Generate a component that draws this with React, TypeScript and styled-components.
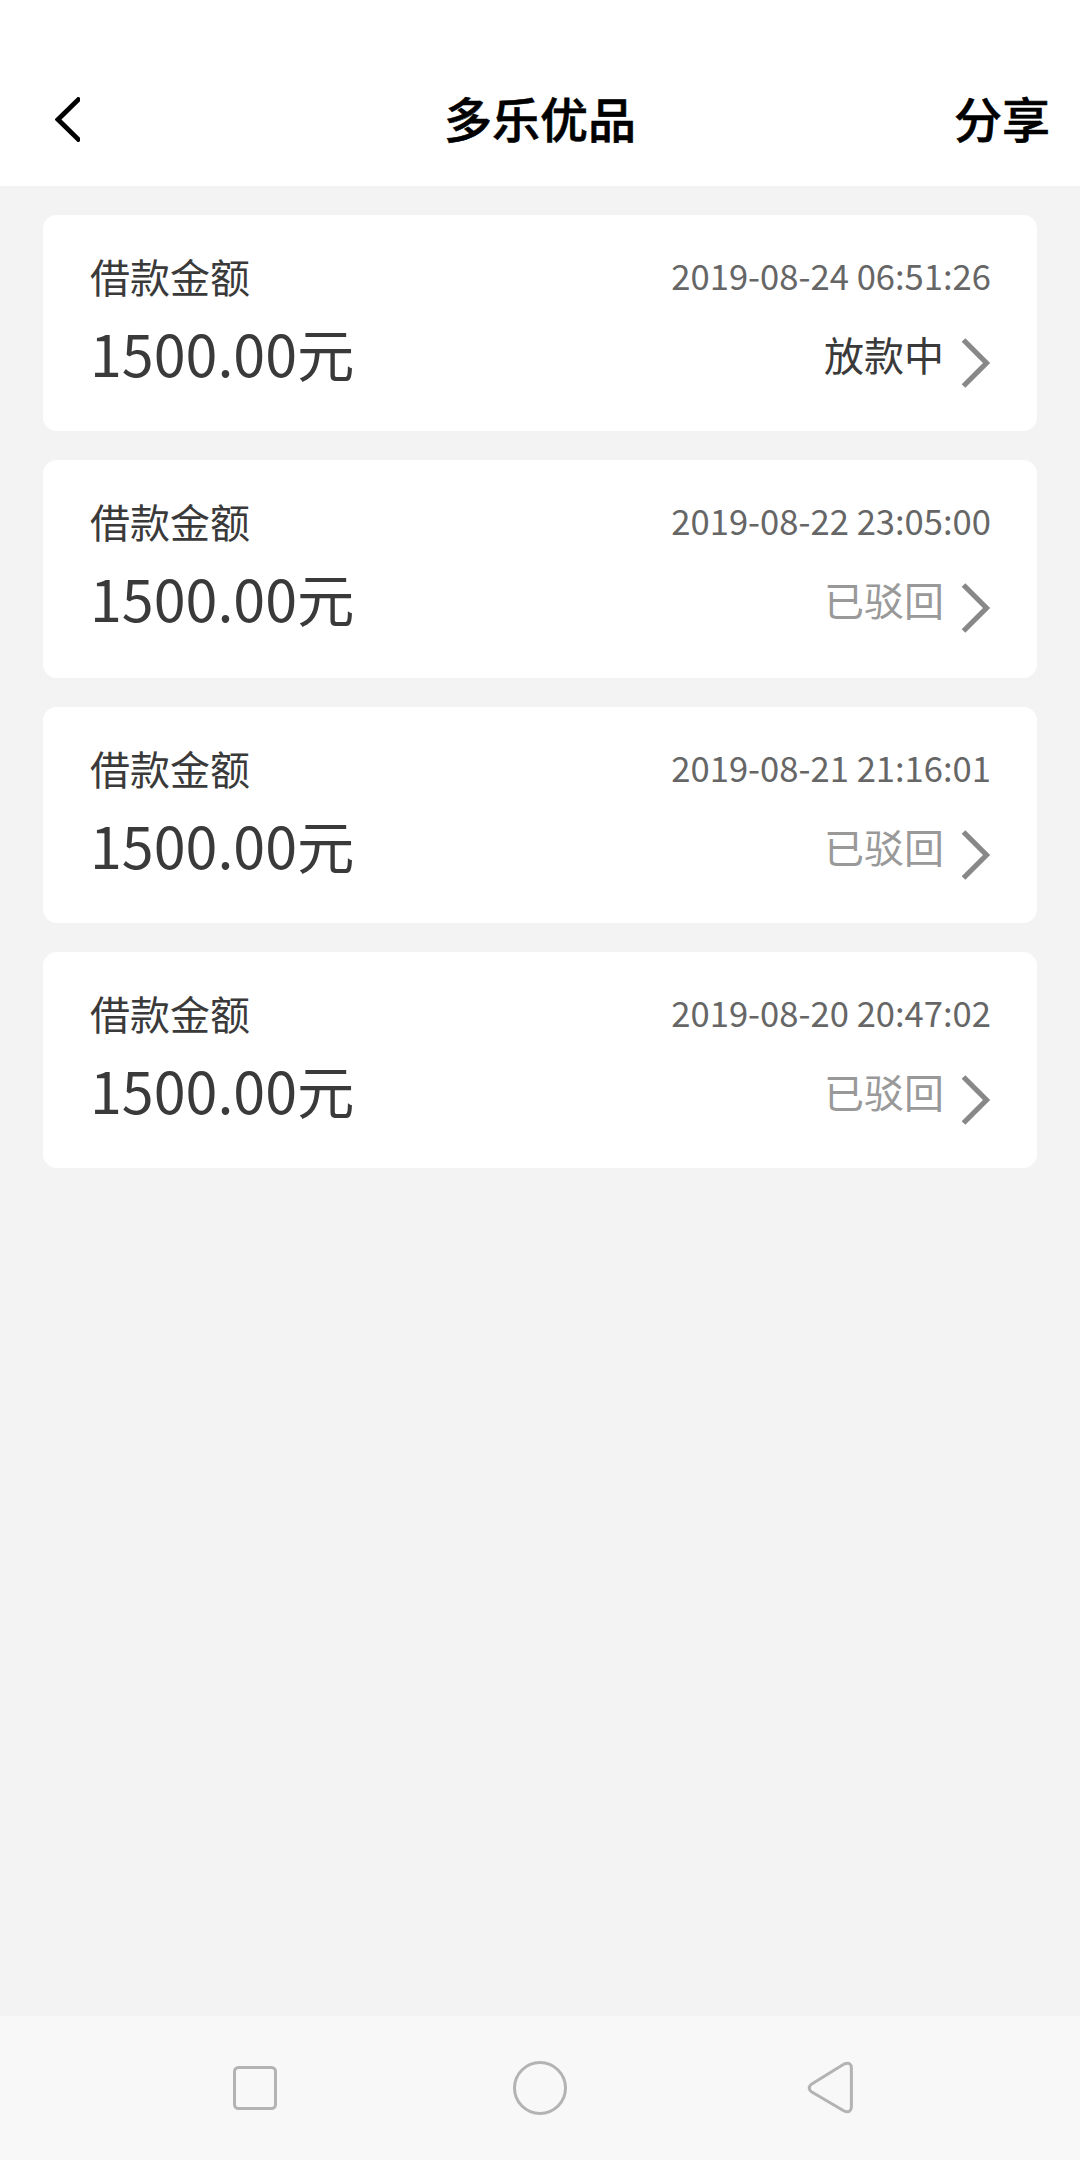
import React from "react";
import styled, { createGlobalStyle } from "styled-components";

const Global = createGlobalStyle`
  body { margin: 0; background: #f3f3f3; }
  * { box-sizing: border-box; }
`;
const Page = styled.div`
  width: 1080px;
  height: 2160px;
  display: flex;
  flex-direction: column;
  background: #f3f3f3;
  font-family: "Noto Sans CJK SC", "Noto Sans", sans-serif;
  overflow: hidden;
`;
const Header = styled.header`
  height: 186px;
  padding: 51px 30px 3px;
  display: grid;
  grid-template-columns: 1fr auto 1fr;
  align-items: center;
  background: #fff;
  color: #000;
  font-size: 48px;
  line-height: 132px;
  font-weight: 500;
  -webkit-text-stroke: 0.6px #000;
`;
const Back = styled.button`
  display: flex;
  padding: 4px 0 0 25px;
  border: 0;
  background: none;
  justify-self: start;
`;
const Title = styled.div`
  text-align: center;
`;
const Share = styled.div`
  justify-self: end;
`;
const List = styled.main`
  flex: 1;
  padding: 29px 43px 0;
  display: flex;
  flex-direction: column;
  gap: 29px;
`;
const Card = styled.section<{ $h: number }>`
  height: ${(p) => p.$h}px;
  padding: 36px 46px 0 47px;
  border-radius: 14px;
  background: #fff;
  display: flex;
  justify-content: space-between;
`;
const Side = styled.div<{ $end?: boolean }>`
  display: flex;
  flex-direction: column;
  align-items: ${(p) => (p.$end ? "flex-end" : "flex-start")};
`;
const Label = styled.div`
  font-size: 40px;
  line-height: 50px;
  color: #3a3a3a;
`;
const Amount = styled.div`
  margin-top: 16px;
  font-size: 57.4px;
  line-height: 70px;
  color: #3a3a3a;
`;
const Time = styled.time`
  font-size: 34.6px;
  line-height: 50px;
  margin-top: -1px;
  color: #666;
`;
const State = styled.div<{ $active: boolean }>`
  margin-top: 24px;
  display: flex;
  gap: 17px;
  font-size: 40px;
  line-height: 60px;
  color: ${(p) => (p.$active ? "#3a3a3a" : "#999")};
`;
const Chevron = styled.svg`
  margin-top: 13px;
`;
const NavBar = styled.nav`
  height: 144px;
  display: flex;
  align-items: center;
  padding-left: 232px;
  background: #f8f8f8;
`;

const loans = [
  { time: "2019-08-24 06:51:26", state: "放款中", active: true, h: 216 },
  { time: "2019-08-22 23:05:00", state: "已驳回", active: false, h: 218 },
  { time: "2019-08-21 21:16:01", state: "已驳回", active: false, h: 216 },
  { time: "2019-08-20 20:47:02", state: "已驳回", active: false, h: 216 },
];

export default function App() {
  return (
    <Page>
      <Global />
      <Header>
        <Back aria-label="返回">
          <svg width="25" height="45" viewBox="0 0 25 45" fill="none" stroke="#000" strokeWidth="4.8">
            <path d="M25 1 3 22.5 25 44" />
          </svg>
        </Back>
        <Title>多乐优品</Title>
        <Share>分享</Share>
      </Header>
      <List>
        {loans.map((l) => (
          <Card key={l.time} $h={l.h}>
            <Side>
              <Label>借款金额</Label>
              <Amount>1500.00元</Amount>
            </Side>
            <Side $end>
              <Time>{l.time}</Time>
              <State $active={l.active}>
                {l.state}
                <Chevron width="30" height="52" viewBox="0 0 30 52" fill="none" stroke="#888" strokeWidth="5.2">
                  <path d="M2.5 3 25.5 26 2.5 49" />
                </Chevron>
              </State>
            </Side>
          </Card>
        ))}
      </List>
      <NavBar>
        <svg width="640" height="60" viewBox="232 2058 640 60" fill="none" stroke="#b3b3b3" strokeWidth="3">
          <rect x="234.5" y="2067.5" width="41" height="41" rx="4" />
          <circle cx="540" cy="2088" r="25.5" />
          <path d="M844.5 2063.8Q851.2 2061.5 851.4 2068V2107Q851 2113.5 844.5 2111.2L811 2091.5Q807.5 2088 811 2084.5Z" strokeLinejoin="round" />
        </svg>
      </NavBar>
    </Page>
  );
}
